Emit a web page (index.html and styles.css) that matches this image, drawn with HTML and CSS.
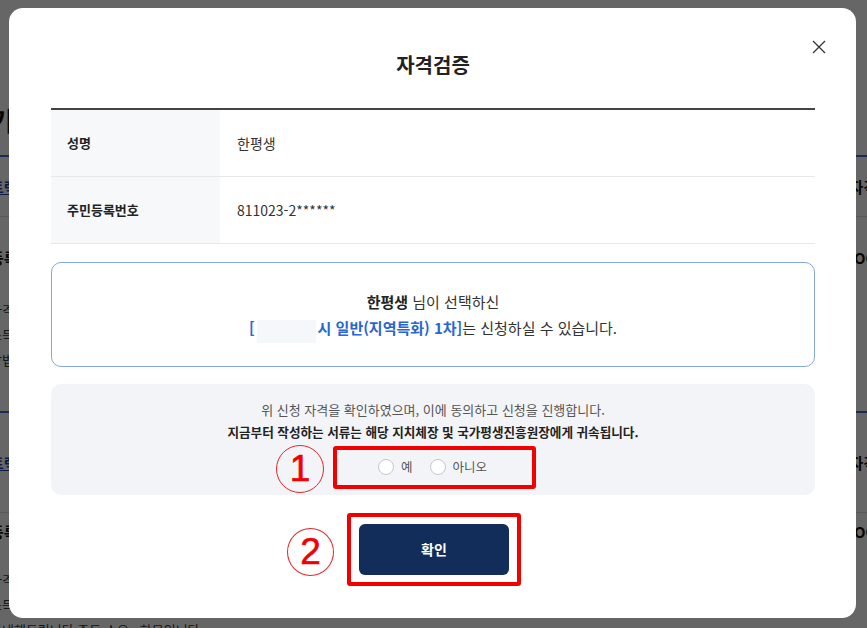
FILE: index.html
```html
<!DOCTYPE html>
<html lang="ko">
<head>
<meta charset="utf-8">
<title>자격검증</title>
<link rel="stylesheet" href="styles.css">
</head>
<body>
<div class="page">
  <h1 class="page-title">기관 신청</h1>
  <section class="blk">
    <div class="bg-row r1"><span class="tab">트랙 안내</span><span class="tag">신청 자격</span></div>
    <div class="bg-row r2"><span>등록 기간</span><span>OOO</span></div>
    <div class="bg-lines"><p>자격 요건 안내</p><p>소득 기준 확인</p><p>방법 안내</p></div>
  </section>
  <section class="blk b2">
    <div class="bg-row r1"><span class="tab">트랙 안내</span><span class="tag">신청 자격</span></div>
    <div class="bg-row r2"><span>등록 기간</span><span>OOO</span></div>
    <div class="bg-lines"><p>자격 요건 안내</p><p>소득 기준 확인</p><p>안내해드립니다 주도 소요 · 하므입니다</p></div>
  </section>
</div>

<div class="overlay"></div>

<div class="modal" role="dialog" aria-labelledby="modal-title">
  <button class="close" type="button" aria-label="닫기">
    <svg width="14" height="14" viewBox="0 0 14 14"><path d="M1 1L13 13M13 1L1 13" stroke="#333" stroke-width="1.3" fill="none"/></svg>
  </button>
  <h2 class="title" id="modal-title">자격검증</h2>

  <table class="info-table">
    <tr><th>성명</th><td>한평생</td></tr>
    <tr><th>주민등록번호</th><td>811023-2******</td></tr>
  </table>

  <div class="notice">
    <p><strong>한평생</strong> 님이 선택하신</p>
    <p><span class="hl">[<span class="mask"></span>시 일반(지역특화) 1차]</span>는 신청하실 수 있습니다.</p>
  </div>

  <div class="agree">
    <p class="plain">위 신청 자격을 확인하였으며, 이에 동의하고 신청을 진행합니다.</p>
    <p class="strong">지금부터 작성하는 서류는 해당 지치체장 및 국가평생진흥원장에게 귀속됩니다.</p>
    <div class="radio-wrap">
      <div class="mark-box radios">
        <span class="num num1">1</span>
        <label class="radio"><span class="dot"></span>예</label>
        <label class="radio"><span class="dot"></span>아니오</label>
      </div>
    </div>
  </div>

  <div class="btn-wrap">
    <div class="mark-box btn-box">
      <span class="num num2">2</span>
      <button class="confirm" type="button">확인</button>
    </div>
  </div>
</div>
</body>
</html>
```
FILE: styles.css
```css
* { box-sizing: border-box; }
html, body { margin: 0; padding: 0; }
body {
  width: 867px;
  height: 628px;
  overflow: hidden;
  background: #fff;
  font-family: "Noto Sans CJK KR", "Noto Sans", sans-serif;
  color: #222;
}
p { margin: 0; }

/* underlying page */
.page {
  margin-left: -10px;
  width: 887px;
  padding-top: 104px;
}
.page-title {
  margin: 0 0 19px 0;
  font-size: 26px;
  line-height: 32px;
  font-weight: 700;
  color: #111;
  letter-spacing: -1px;
}
.blk { border-top: 2px solid #3f6fd6; }
.b2 { margin-top: 39px; }
.bg-row {
  display: flex;
  justify-content: space-between;
  align-items: center;
  font-size: 15px;
  font-weight: 700;
  color: #111;
}
.r1 { height: 60px; border-bottom: 1px solid #ddd; }
.r1 .tab { color: #1a46b0; text-decoration: underline; }
.r2 { height: 80px; }
.b2 .r1 { height: 100px; }
.b2 .r2 { height: 36px; }
.bg-lines { font-size: 13px; line-height: 25px; color: #333; }
.b2 .bg-lines { padding-top: 18px; }

.overlay {
  position: fixed;
  inset: 0;
  background: rgba(0, 0, 0, 0.6);
}

/* modal */
.modal {
  position: fixed;
  left: 9px;
  top: 8px;
  width: 847px;
  height: 610px;
  background: #fff;
  border-radius: 14px;
  padding: 42px 41px 0 42px;
}
.close {
  position: absolute;
  left: 802px;
  top: 31px;
  width: 16px;
  height: 16px;
  padding: 1px;
  border: 0;
  background: none;
  display: flex;
  align-items: center;
  justify-content: center;
}
.title {
  margin: 0 0 28px 0;
  text-align: center;
  font-size: 20px;
  line-height: 30px;
  font-weight: 700;
  color: #222;
}

.info-table {
  width: 100%;
  border-collapse: collapse;
  border-top: 2px solid #444;
}
.info-table th,
.info-table td {
  height: 67px;
  border-bottom: 1px solid #e7e8ea;
  text-align: left;
  vertical-align: middle;
}
.info-table th {
  width: 169px;
  padding-left: 16px;
  background: #f7f8fa;
  font-size: 13px;
  font-weight: 700;
  color: #222;
}
.info-table td {
  padding-left: 17px;
  font-size: 14px;
  color: #333;
}

.notice {
  margin-top: 18px;
  height: 105px;
  border: 1px solid #86a8de;
  border-radius: 10px;
  display: flex;
  flex-direction: column;
  justify-content: center;
  align-items: center;
  font-size: 15px;
  line-height: 26px;
  color: #333;
  padding-top: 3px;
}
.notice strong { color: #222; font-weight: 700; }
.hl { color: #2767cf; font-weight: 700; }
.mask {
  display: inline-block;
  width: 59px;
  height: 23px;
  margin: 0 2px;
  vertical-align: -9px;
  background: #f5f7fb;
}

.agree {
  margin-top: 17px;
  height: 111px;
  background: #f3f4f8;
  border-radius: 10px;
  padding-top: 15px;
  text-align: center;
  line-height: 22px;
  color: #555;
}
.agree .plain { font-size: 13px; }
.agree .strong { font-size: 12.6px; font-weight: 700; color: #222; }
.radio-wrap {
  margin-top: 3px;
  display: flex;
  justify-content: center;
  padding-left: 3px;
}
.mark-box {
  position: relative;
  border: 4px solid #f20000;
  border-radius: 3px;
}
.radios {
  width: 203px;
  height: 43px;
  display: flex;
  align-items: center;
  padding-left: 41px;
}
.radio {
  display: flex;
  align-items: center;
  gap: 7px;
  font-size: 12.5px;
  color: #555;
  margin-right: 17px;
}
.dot {
  width: 16px;
  height: 16px;
  border-radius: 50%;
  border: 1px solid #c4c6cc;
  background: #fff;
}
.num {
  position: absolute;
  width: 48px;
  height: 48px;
  border: 1.5px solid #e8262b;
  border-radius: 50%;
  color: #f20000;
  font-family: "Liberation Sans", Arial, sans-serif;
  font-weight: 400;
  font-size: 37px;
  line-height: 45px;
  text-align: center;
  -webkit-text-stroke: 0.6px #f20000;
}
.num1 { right: 100%; margin-right: 13px; top: -5px; }
.num2 { right: 100%; margin-right: 17px; top: 11px; width: 47px; height: 48px; }

.btn-wrap {
  margin-top: 18px;
  display: flex;
  justify-content: center;
  padding-left: 2px;
}
.btn-box { padding: 7px 8px; }
.confirm {
  display: block;
  width: 150px;
  height: 51px;
  border: 0;
  border-radius: 6px;
  background: #132d5b;
  color: #fff;
  font-family: "Noto Sans CJK KR", "Noto Sans", sans-serif;
  font-size: 14px;
  font-weight: 700;
}
```
